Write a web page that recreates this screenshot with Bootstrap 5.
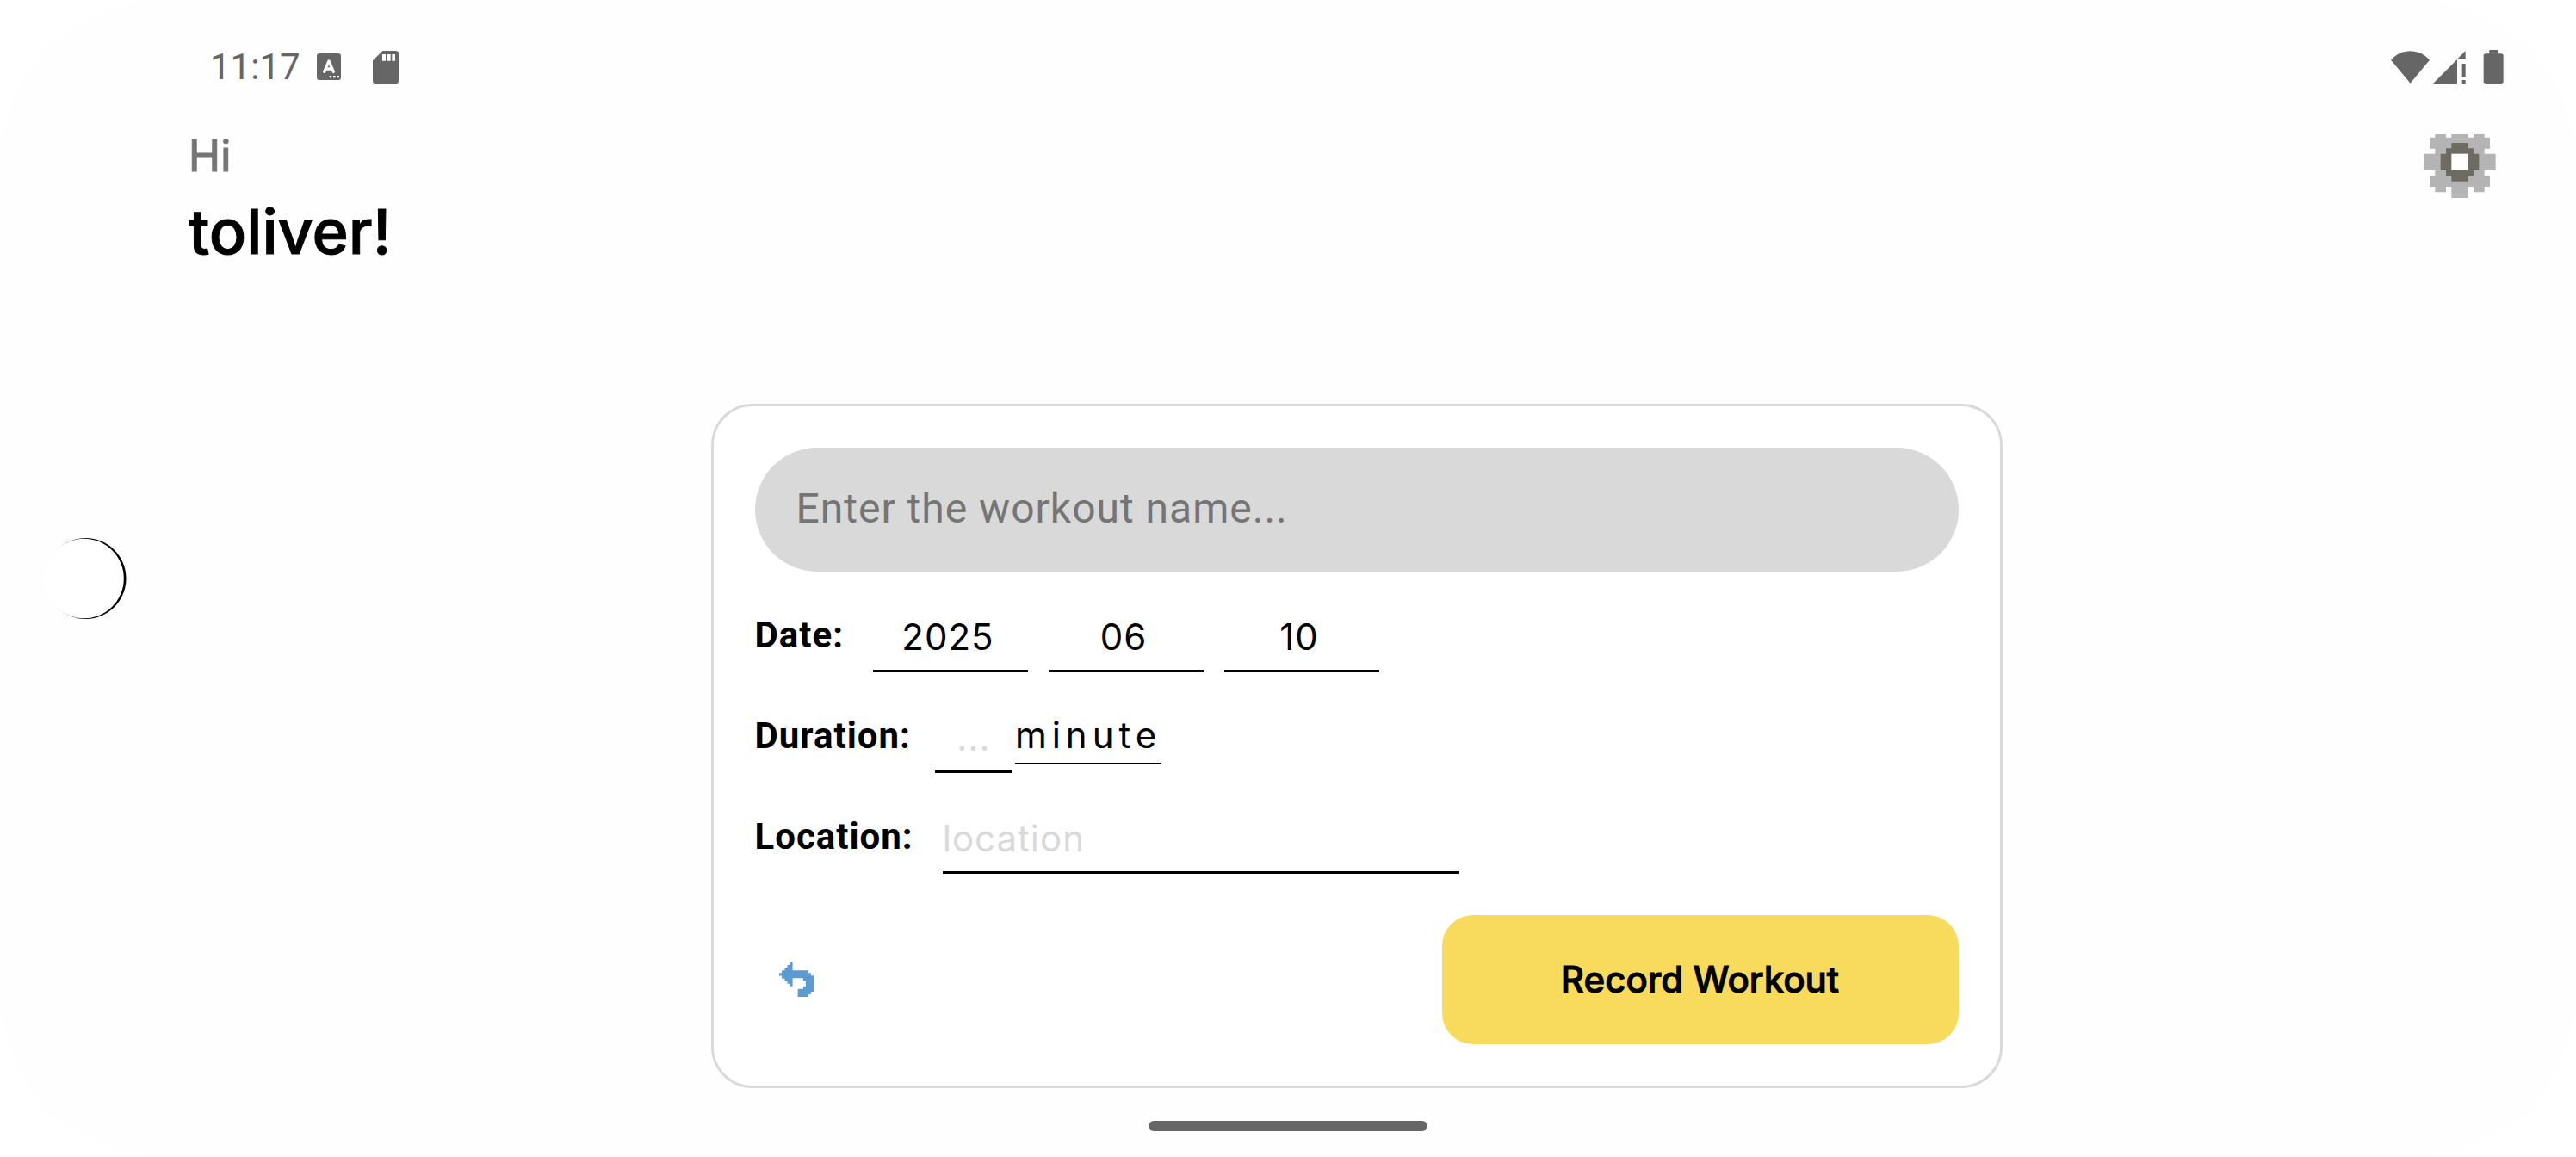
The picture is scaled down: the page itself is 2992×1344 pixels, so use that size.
<!DOCTYPE html>
<html lang="en">
<head>
<meta charset="utf-8">
<meta name="viewport" content="width=device-width, initial-scale=1">
<title>Record workout</title>
<link href="https://cdn.jsdelivr.net/npm/bootstrap@5.3.0/dist/css/bootstrap.min.css" rel="stylesheet">
<style>
  body { background: #fff; font-family: Roboto, sans-serif; color: #000; }
  .screen { min-height: 100vh; padding-bottom: 30px; background: #fefefe; border-radius: 190px; }
  .status-bar { height: 150px; padding: 5px 84px 0 244px; color: #666; }
  .status-bar svg, .plain-btn svg, .cutout svg { display: block; fill: currentColor; }
  .clock { font-size: 42px; line-height: 48px; }
  .status-left { column-gap: 19px; }
  .status-left .sd-card { margin-left: 18px; }
  .status-right { column-gap: 4px; }
  .status-right .battery { margin-left: 16px; }
  .app-area { padding-left: 159px; }
  .greeting { padding: 0 93px 0 60px; }
  .hello, .user-name, .save-btn { -webkit-text-stroke: 1px currentColor; }
  .hello { font: 400 52px/64px Roboto, sans-serif; color: #757575; }
  .user-name { font: 500 72px/110px Inter, sans-serif; }
  .plain-btn { padding: 0; border: 0; background: none; }
  .settings-btn { padding-top: 6px; }
  .cutout { left: 52px; top: 50%; color: #000; }
  .workout { width: 100%; max-width: 1500px; margin: 145px auto 0; padding: 48px; gap: 48px; background: #fff; border: 3px solid #d9d9d9; border-radius: 48px; }
  .name-input { height: 144px; padding: 0 48px 4px; border: 0; border-radius: 72px; font-size: 48px; letter-spacing: 1px; }
  .name-input, .name-input:focus { background: #d9d9d9; }
  .name-input::placeholder { color: #757575; }
  .entry { height: 69px; }
  .entry-label { margin-right: 34px; font-size: 42px; line-height: 52px; font-weight: 700; letter-spacing: 1px; }
  .entry-label.tight { margin-right: 28px; }
  .line-input { height: 69px; padding: 0 0 12px; border: 0; border-bottom: 3px solid #000; border-radius: 0; background: transparent; color: #000; font: 400 42px/54px Inter, sans-serif; letter-spacing: 1px; }
  .line-input::placeholder { color: #d9d9d9; }
  .date-parts { gap: 24px; }
  .date-parts .line-input { width: 180px; padding-right: 6px; }
  .duration-parts { gap: 3px; }
  .duration-parts .line-input { width: 90px; }
  .place-input { width: 600px; }
  .unit-btn { padding: 0 0 7px; border: 0; border-bottom: 2px solid #000; background: none; color: #000; font: 400 42px/50px Inter, sans-serif; letter-spacing: 6px; }
  .back-btn { padding: 0 28px; color: #5b9bd5; }
  .save-btn, .save-btn:hover { width: 600px; height: 150px; border: 0; border-radius: 36px; background: #f8db5c; color: #000; font: 500 42px/48px Inter, sans-serif; }
  .gesture { width: 324px; height: 12px; border-radius: 6px; background: #666; }
</style>
<script src="https://cdn.jsdelivr.net/npm/bootstrap@5.3.0/dist/js/bootstrap.bundle.min.js"></script>
</head>
<body>
<div class="screen position-relative d-flex flex-column">

  <div class="status-bar d-flex align-items-center justify-content-between">
    <div class="status-left d-flex align-items-center">
      <span class="clock">11:17</span>
      <svg width="28" height="31" viewBox="0 0 84 93" aria-hidden="true">
        <rect width="84" height="93" rx="10"/>
        <path d="M26 64L42 27L58 64M32 54H52" fill="none" stroke="#fefefe" stroke-width="10" stroke-linecap="round" stroke-linejoin="round"/>
        <path d="M44 78h8v7h-8zM57 78h8v7h-8zM70 78h8v7h-8z" fill="#fefefe"/>
      </svg>
      <svg class="sd-card" width="30" height="38" viewBox="0 0 90 114" aria-hidden="true">
        <path d="M34 0H80Q90 0 90 10V104Q90 114 80 114H10Q0 114 0 104V34Z"/>
        <path d="M33 12h12v23H33zM50 12h12v23H50zM67 12h11v23H67z" fill="#fefefe"/>
      </svg>
    </div>
    <div class="status-right d-flex align-items-center">
      <svg width="45" height="38" viewBox="0 0 135 114" aria-hidden="true"><path d="M0 32Q28 1 67.500 1T135 32L67.500 113Z"/></svg>
      <svg width="38" height="38" viewBox="0 0 114 114" aria-hidden="true"><path d="M0 114L84 30V114ZM86 27L113 0V27ZM101 45h12v45h-12zM101 102h12v12h-12z"/></svg>
      <svg class="battery" width="24" height="39" viewBox="0 0 72 117" aria-hidden="true"><path d="M22 0H51V13H63Q71 13 71 21V109Q71 117 63 117H10Q2 117 2 109V21Q2 13 10 13H22Z"/></svg>
    </div>
  </div>

  <div class="cutout position-absolute translate-middle-y" aria-hidden="true">
    <svg width="95" height="94" viewBox="0 0 95 94"><circle cx="47.500" cy="47" r="47"/><circle cx="45.600" cy="47" r="46.200" fill="#fff"/></svg>
  </div>

  <main class="app-area">
    <header class="greeting d-flex justify-content-between align-items-start">
      <div>
        <p class="hello m-0">Hi</p>
        <h1 class="user-name m-0">toliver!</h1>
      </div>
      <button type="button" class="plain-btn settings-btn" aria-label="Settings">
        <svg width="84" height="74" viewBox="226 348 250 222" aria-hidden="true">
          <path fill="#b4b4b4" d="M265 348H303V359H322V348H380V359H399V348H437V359H456V398H437V416H476V474H437V493H456V531H437V550H399V531H380V570H322V531H303V550H265V531H246V493H265V474H226V416H265V398H246V359H265Z"/>
          <path fill="#6e6b62" d="M322 378H380V397H399V416H418V474H399V493H380V512H322V493H303V474H284V416H303V397H322Z"/>
          <path fill="#fff" d="M322 416H380V474H322Z"/>
        </svg>
      </button>
    </header>

    <form class="workout d-flex flex-column">
      <input type="text" class="name-input form-control" aria-label="Workout name" placeholder="Enter the workout name...">

      <div class="entry d-flex align-items-start">
        <label class="entry-label" for="year">Date:</label>
        <div class="date-parts d-flex">
          <input type="text" class="line-input text-center" id="year" value="2025">
          <input type="text" class="line-input text-center" aria-label="Month" value="06">
          <input type="text" class="line-input text-center" aria-label="Day" value="10">
        </div>
      </div>

      <div class="entry d-flex align-items-start">
        <label class="entry-label tight" for="duration">Duration:</label>
        <div class="duration-parts d-flex align-items-start">
          <input type="text" class="line-input text-center" id="duration" placeholder="...">
          <button type="button" class="unit-btn">minute</button>
        </div>
      </div>

      <div class="entry d-flex align-items-start">
        <label class="entry-label" for="place">Location:</label>
        <input type="text" class="line-input place-input" id="place" placeholder="location">
      </div>

      <div class="d-flex align-items-center justify-content-between">
        <button type="button" class="plain-btn back-btn" aria-label="Back">
          <svg width="40" height="40" viewBox="74 85 118 118" aria-hidden="true"><path d="M74 121H83V112H93V103H102V94H111V85H120V112H174V121H183V130H192V185H183V194H174V203H138V176H156V167H165V148H156V139H120V167H111V158H102V149H93V140H83V131H74Z"/></svg>
        </button>
        <button type="submit" class="save-btn btn">Record Workout</button>
      </div>
    </form>
  </main>

  <div class="gesture mx-auto mt-auto"></div>
</div>
</body>
</html>
